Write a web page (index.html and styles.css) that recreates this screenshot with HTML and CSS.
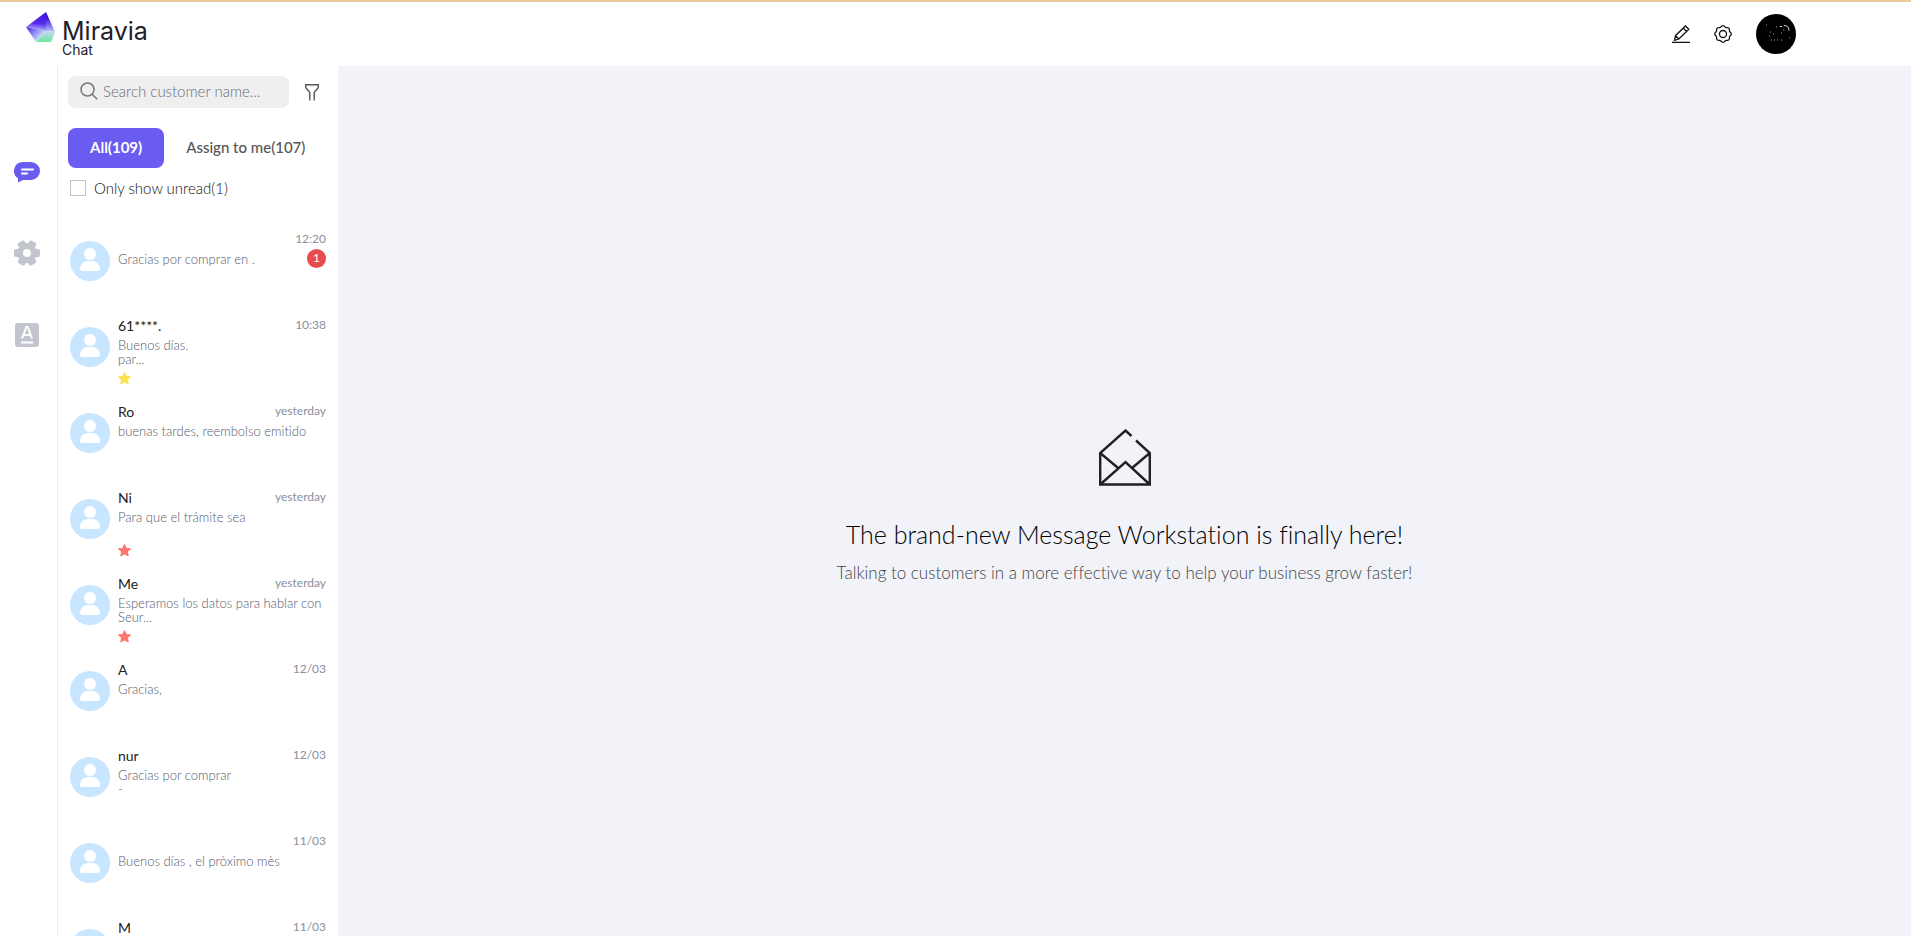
FILE: index.html
```html
<!DOCTYPE html>
<html lang="en">
<head>
    <meta charset="UTF-8">
    <meta name="viewport" content="width=device-width, initial-scale=1.0">
    <title>Miravia Chat</title>
    <link rel="stylesheet" href="styles.css">
</head>
<body>
    <svg class="sprite" aria-hidden="true">
        <symbol id="user" viewBox="0 0 40 40">
            <circle cx="20" cy="20" r="20" fill="#c8e6ff"/>
            <circle cx="20" cy="13" r="6" fill="#fff"/>
            <path d="M10 28c0-5 4-8 8-8h4c4 0 8 3 8 8q0 2-2 2H12q-2 0-2-2z" fill="#fff"/>
        </symbol>
        <symbol id="star" viewBox="0 0 12 12">
            <path d="M6 .6l1.6 3.5 3.8.4-2.8 2.6.8 3.8L6 9l-3.4 1.9.8-3.8L.6 4.5l3.8-.4z" fill="currentColor" stroke="currentColor" stroke-linejoin="round"/>
        </symbol>
    </svg>

    <header class="topbar">
        <a class="brand" href="#">
            <svg class="brand-mark" viewBox="0 0 29 30">
                <defs>
                    <linearGradient id="g1" x1=".6" y1="0" x2=".5" y2="1">
                        <stop offset="0" stop-color="#3d12dc"/>
                        <stop offset=".6" stop-color="#5a2cf0"/>
                        <stop offset="1" stop-color="#b9bffa"/>
                    </linearGradient>
                    <linearGradient id="g2" x1="0" y1="0" x2="0" y2="1">
                        <stop offset=".3" stop-color="#3d12dc"/>
                        <stop offset="1" stop-color="#b9c8fa"/>
                    </linearGradient>
                    <linearGradient id="g3" x1="0" y1="0" x2=".8" y2=".6">
                        <stop offset="0" stop-color="#4a1cea"/>
                        <stop offset="1" stop-color="#c5dcf8"/>
                    </linearGradient>
                    <linearGradient id="g4" x1="0" y1="0" x2="0" y2="1">
                        <stop offset="0" stop-color="#c4d8f8"/>
                        <stop offset="1" stop-color="#6fe89a"/>
                    </linearGradient>
                </defs>
                <path d="M20 0L0 15l20 4z" fill="url(#g1)"/>
                <path d="M20 0l9 20-9-1z" fill="url(#g2)"/>
                <path d="M0 15l20 4-10 11z" fill="url(#g3)"/>
                <path d="M20 19l9 1-4 10H10z" fill="url(#g4)"/>
            </svg>
            <span class="brand-text">
                <span class="brand-name">Miravia</span>
                <span class="brand-sub">Chat</span>
            </span>
        </a>
        <div class="actions">
            <button class="icon-button" aria-label="Edit">
                <svg viewBox="0 0 18 18" fill="none" stroke="#111" stroke-width="1.3">
                    <path d="M0 17.3h18M2.5 15.3l1-4.6L13.4 1l3.4 3.2L6.9 14zM11.2 3.2l3.4 3.2M3.5 10.7L6.9 14"/>
                </svg>
            </button>
            <button class="icon-button" aria-label="Settings">
                <svg viewBox="0 0 18 18" fill="none" stroke="#111" stroke-width="1.3">
                    <path d="M6.800 2.200Q9-.8 11.200 2.200L12.200 2.600Q15.900 2.100 15.400 5.800L15.800 6.800Q18.800 9 15.800 11.200L15.400 12.200Q15.900 15.900 12.200 15.400L11.200 15.800Q9 18.800 6.800 15.800L5.800 15.400Q2.100 15.900 2.600 12.200L2.200 11.200Q-.8 9 2.200 6.800L2.600 5.800Q2.100 2.100 5.800 2.600z" stroke-linejoin="round"/>
                    <circle cx="9" cy="9" r="3.5"/>
                </svg>
            </button>
            <button class="profile" aria-label="Account">
                <svg viewBox="0 0 40 40">
                    <circle cx="20" cy="20" r="20" fill="#000"/>
                    <path d="M24 12.500h2M28 11.500q5 0 5 5" fill="none" stroke="#ddd"/>
                    <path d="M10 11h1M20 13h1M17 20h1M14 18h1M25 19h1M33 24h1M15 26h1M18 26h1M21 26h1M25 26h1M13 22h1M27 16h1" fill="none" stroke="#999"/>
                </svg>
            </button>
        </div>
    </header>

    <div class="layout">
        <nav class="rail">
            <a href="#" aria-label="Chats">
                <svg width="26" height="21" viewBox="0 0 26 21">
                    <path d="M9 0h8a9 9 0 0 1 0 18H9l-5 2.500V16.500A9 9 0 0 1 9 0z" fill="#6a5cf0"/>
                    <path d="M8 7.500h11M8 11.500h5" stroke="#fff" stroke-width="2" stroke-linecap="round"/>
                </svg>
            </a>
            <a href="#" aria-label="Settings">
                <svg width="26" height="26" viewBox="0 0 26 26">
                    <g fill="#c2c4ce">
                        <circle cx="13" cy="13" r="10"/>
                        <rect x="0" y="9" width="26" height="8" rx="2"/>
                        <rect x="0" y="9" width="26" height="8" rx="2" transform="rotate(60 13 13)"/>
                        <rect x="0" y="9" width="26" height="8" rx="2" transform="rotate(120 13 13)"/>
                    </g>
                    <circle cx="13" cy="13" r="4" fill="#fff"/>
                </svg>
            </a>
            <a href="#" aria-label="Auto reply">
                <svg width="24" height="24" viewBox="0 0 24 24">
                    <rect width="24" height="24" rx="3" fill="#c2c4ce"/>
                    <path d="M7 15.500l4.300-11.500h1.400L17 15.500M8.800 12h6.400M6 19.500h12" fill="none" stroke="#fff" stroke-width="2"/>
                </svg>
            </a>
        </nav>

        <aside class="panel">
            <div class="search-row">
                <div class="search">
                    <svg width="18" height="18" viewBox="0 0 18 18" fill="none" stroke="#777" stroke-width="1.500">
                        <circle cx="7.500" cy="7.500" r="6.500"/>
                        <path d="M12.200 12.200l5 5"/>
                    </svg>
                    <input type="text" placeholder="Search customer name..." aria-label="Search customer name">
                </div>
                <button class="filter" aria-label="Filter">
                    <svg width="14" height="17" viewBox="0 0 14 17" fill="none" stroke="#555" stroke-width="1.400">
                        <path d="M4.800 16.500V8.500L.7 3.500V.8h12.600v2.700L9.200 8.500v8"/>
                    </svg>
                </button>
            </div>
            <div class="tabs">
                <button class="tab active">All(109)</button>
                <button class="tab">Assign to me(107)</button>
            </div>
            <label class="unread" for="unread">
                <input type="checkbox" id="unread">
                Only show unread(1)
            </label>

            <ul class="chats">
                <li class="chat">
                    <svg class="avatar"><use href="#user"/></svg>
                    <div class="info">
                        <div class="name"></div>
                        <p class="message">Gracias por comprar en .</p>
                    </div>
                    <div class="meta"><time>12:20</time><span class="badge">1</span></div>
                </li>
                <li class="chat">
                    <svg class="avatar"><use href="#user"/></svg>
                    <div class="info">
                        <div class="name">61****.</div>
                        <p class="message">Buenos días.<br>par...</p>
                        <svg class="star yellow"><use href="#star"/></svg>
                    </div>
                    <div class="meta"><time>10:38</time></div>
                </li>
                <li class="chat">
                    <svg class="avatar"><use href="#user"/></svg>
                    <div class="info">
                        <div class="name">Ro</div>
                        <p class="message">buenas tardes, reembolso emitido</p>
                    </div>
                    <div class="meta"><time>yesterday</time></div>
                </li>
                <li class="chat">
                    <svg class="avatar"><use href="#user"/></svg>
                    <div class="info">
                        <div class="name">Ni</div>
                        <p class="message">Para que el trámite sea</p>
                        <svg class="star red"><use href="#star"/></svg>
                    </div>
                    <div class="meta"><time>yesterday</time></div>
                </li>
                <li class="chat">
                    <svg class="avatar"><use href="#user"/></svg>
                    <div class="info">
                        <div class="name">Me</div>
                        <p class="message">Esperamos los datos para hablar con Seur...</p>
                        <svg class="star red"><use href="#star"/></svg>
                    </div>
                    <div class="meta"><time>yesterday</time></div>
                </li>
                <li class="chat">
                    <svg class="avatar"><use href="#user"/></svg>
                    <div class="info">
                        <div class="name">A</div>
                        <p class="message">Gracias,</p>
                    </div>
                    <div class="meta"><time>12/03</time></div>
                </li>
                <li class="chat">
                    <svg class="avatar"><use href="#user"/></svg>
                    <div class="info">
                        <div class="name">nur</div>
                        <p class="message">Gracias por comprar<br>-</p>
                    </div>
                    <div class="meta"><time>12/03</time></div>
                </li>
                <li class="chat">
                    <svg class="avatar"><use href="#user"/></svg>
                    <div class="info">
                        <div class="name"></div>
                        <p class="message">Buenos días , el pròximo mès</p>
                    </div>
                    <div class="meta"><time>11/03</time></div>
                </li>
                <li class="chat">
                    <svg class="avatar"><use href="#user"/></svg>
                    <div class="info">
                        <div class="name">M</div>
                        <p class="message"></p>
                    </div>
                    <div class="meta"><time>11/03</time></div>
                </li>
            </ul>
        </aside>

        <main class="welcome">
            <svg width="52" height="57" viewBox="0 0 52 57" fill="none" stroke="#1f2126" stroke-width="2.400">
                <path d="M32.500 7L26.500 1.500 1.200 24v31.500h49.600V24L37 11.500M1.200 24l18.500 15.500M50.800 24L32.500 39.500M1.200 55.500L26.500 33l24.300 22.500"/>
            </svg>
            <h1>The brand-new Message Workstation is finally here!</h1>
            <p>Talking to customers in a more effective way to help your business grow faster!</p>
        </main>
    </div>
</body>
</html>
```
FILE: styles.css
```css
* {
    margin: 0;
    padding: 0;
    box-sizing: border-box;
    font-family: Lato, "Open Sans", sans-serif;
    font-variant-ligatures: none;
}

body {
    display: flex;
    flex-direction: column;
    height: 100vh;
    overflow: hidden;
    background: white;
    color: #222;
}

button {
    border: none;
    background: none;
    cursor: pointer;
}

svg {
    display: block;
    flex-shrink: 0;
}

.sprite {
    width: 0;
    height: 0;
    position: absolute;
}

.topbar {
    display: flex;
    justify-content: space-between;
    align-items: flex-start;
    padding: 10px 115px 10px 26px;
    border-top: 2px solid #edc898;
}

.brand {
    display: flex;
    gap: 7px;
    color: #1f2029;
    text-decoration: none;
}

.brand-mark {
    width: 29px;
    height: 30px;
}

.brand-text {
    display: flex;
    flex-direction: column;
    padding-top: 6px;
}

.brand-name {
    font-family: Inter, sans-serif;
    font-size: 25px;
    line-height: 26px;
}

.brand-sub {
    font-family: Inter, sans-serif;
    font-size: 14px;
    line-height: 12px;
}

.actions {
    display: flex;
    align-items: center;
    gap: 24px;
    padding-top: 2px;
}

.icon-button svg {
    width: 18px;
    height: 18px;
}

.profile svg {
    width: 40px;
    height: 40px;
}

.layout {
    display: flex;
    flex: 1;
    min-height: 0;
}

.rail {
    display: flex;
    flex-direction: column;
    align-items: center;
    gap: 57px;
    width: 58px;
    padding: 96px 4px 0 0;
    border-right: 1px solid #ebebef;
}

.panel {
    width: 280px;
    padding: 10px 12px 0 10px;
    overflow: hidden;
}

.search-row {
    display: flex;
    align-items: center;
    gap: 16px;
}

.search {
    display: flex;
    align-items: center;
    gap: 5px;
    width: 221px;
    height: 32px;
    padding: 0 12px 2px;
    border-radius: 8px;
    background: #efefef;
}

.search input {
    width: 100%;
    border: none;
    outline: none;
    background: none;
    font-size: 15px;
    font-weight: 300;
}

.search input::placeholder {
    color: #666c80;
}

.tabs {
    display: flex;
    margin-top: 20px;
}

.tab {
    height: 40px;
    padding: 0 22px 2px;
    border-radius: 8px;
    color: #555;
    font-size: 15px;
    font-weight: 500;
    white-space: nowrap;
}

.tab.active {
    background: #6a5cf0;
    color: white;
    font-weight: 700;
}

.unread {
    display: flex;
    align-items: center;
    gap: 8px;
    margin-top: 10px;
    padding-left: 2px;
    color: #111;
    font-size: 15px;
    font-weight: 300;
    line-height: 20px;
}

.unread input {
    appearance: none;
    width: 16px;
    height: 16px;
    border: 1px solid #c3c3cf;
}

.chats {
    list-style: none;
    margin-top: 29px;
    padding-left: 2px;
}

.chat {
    display: flex;
    height: 86px;
}

.avatar {
    width: 40px;
    height: 40px;
    margin-top: 14px;
}

.info {
    flex: 1;
    min-width: 0;
    padding: 4px 0 0 8px;
}

.name {
    height: 18px;
    margin-bottom: 3px;
    font-size: 14px;
    line-height: 18px;
}

.message {
    min-height: 28px;
    margin-right: -52px;
    color: #555a6c;
    font-size: 13px;
    font-weight: 300;
    line-height: 14px;
}

.star {
    width: 13px;
    height: 13px;
    margin-top: 6px;
}

.yellow {
    color: #ffe14d;
}

.red {
    color: #ff746c;
}

.meta {
    display: flex;
    flex-direction: column;
    align-items: flex-end;
    padding-top: 3px;
    color: #8b8f9d;
    font-size: 12px;
    line-height: 18px;
}

.badge {
    width: 19px;
    height: 19px;
    margin-top: 1px;
    border-radius: 50%;
    background: #e84b4b;
    color: white;
    text-align: center;
}

.welcome {
    display: flex;
    flex: 1;
    flex-direction: column;
    align-items: center;
    justify-content: center;
    padding-top: 10px;
    background: #f1f3f9;
}

.welcome h1 {
    margin-top: 32px;
    color: #000;
    font-size: 25px;
    font-weight: 300;
    line-height: 32px;
}

.welcome p {
    margin-top: 12px;
    color: #444;
    font-size: 17px;
    font-weight: 300;
    line-height: 22px;
}
```
